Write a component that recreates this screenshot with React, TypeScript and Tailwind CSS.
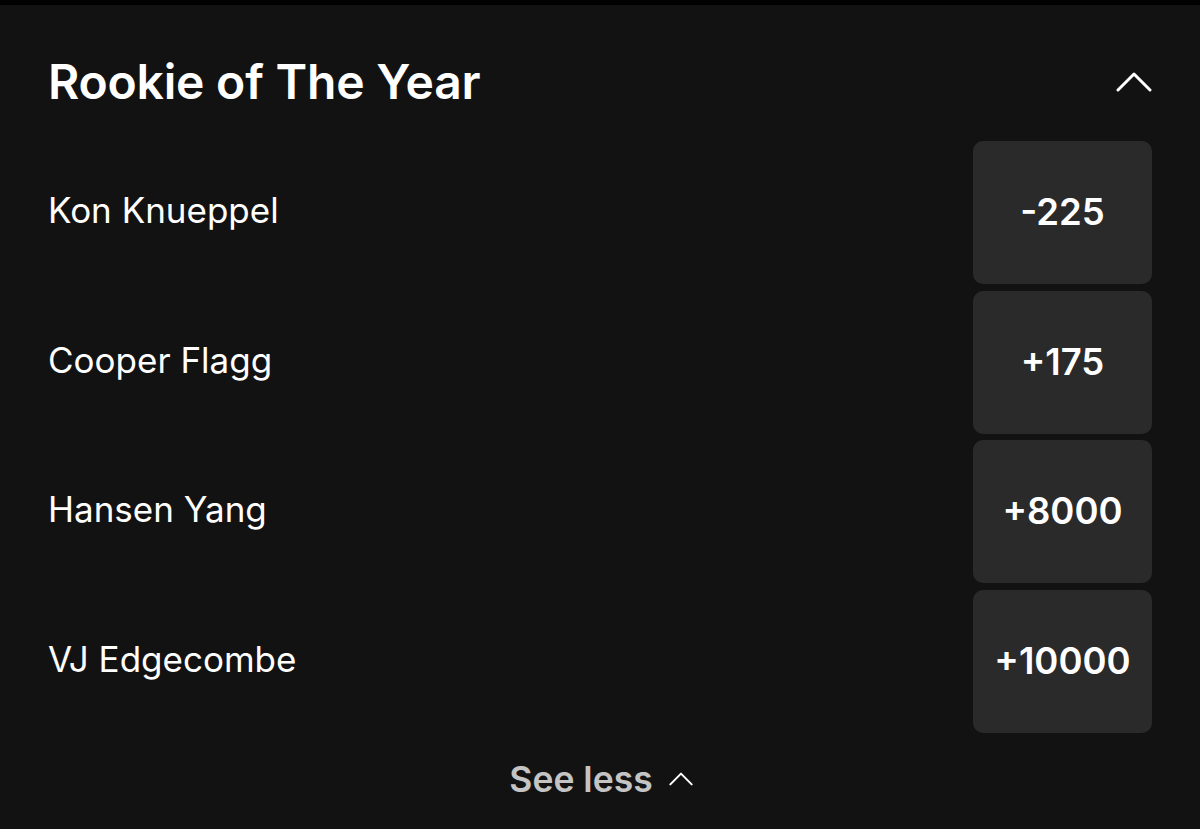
import React from "react";

const rows = [
  { name: "Kon Knueppel", odds: "-225" },
  { name: "Cooper Flagg", odds: "+175" },
  { name: "Hansen Yang", odds: "+8000" },
  { name: "VJ Edgecombe", odds: "+10000" },
];

function Chevron({ className, strokeWidth }: { className: string; strokeWidth: number }) {
  return (
    <svg viewBox="0 0 36 20" className={className} fill="none">
      <path d="M2 18 L18 2 L34 18" stroke="currentColor" strokeWidth={strokeWidth} strokeLinecap="round" strokeLinejoin="round" />
    </svg>
  );
}

export default function App() {
  return (
    <div className="w-[1200px] h-[829px] bg-[#121212] flex flex-col overflow-hidden" style={{ fontFamily: "Inter, 'Noto Sans', sans-serif" }}>
      <div className="h-[5px] bg-black shrink-0" />
      <div className="flex items-center justify-between px-[48px] h-[136px] shrink-0 pt-[18px]">
        <h1 className="text-white text-[48px] font-semibold tracking-[-0.2px] leading-none">Rookie of The Year</h1>
        <Chevron className="w-[36px] h-[20px] text-white" strokeWidth={3} />
      </div>
      <div className="flex flex-col gap-[6.5px] px-[48px]">
        {rows.map((r) => (
          <div key={r.name} className="flex items-center justify-between h-[143px]">
            <span className="text-white text-[35px] font-normal pb-[4px]">{r.name}</span>
            <div className="w-[179px] h-[143px] rounded-[10px] bg-[#2a2a2a] flex items-center justify-center">
              <span className="text-white text-[36.5px] font-semibold">{r.odds}</span>
            </div>
          </div>
        ))}
      </div>
      <div className="flex items-center justify-center gap-[16px] pt-[20px] pl-[2px]">
        <span className="text-[#c4c4c4] text-[35.5px] font-semibold">See less</span>
        <Chevron className="w-[24px] h-[14px] text-white" strokeWidth={3} />
      </div>
    </div>
  );
}
